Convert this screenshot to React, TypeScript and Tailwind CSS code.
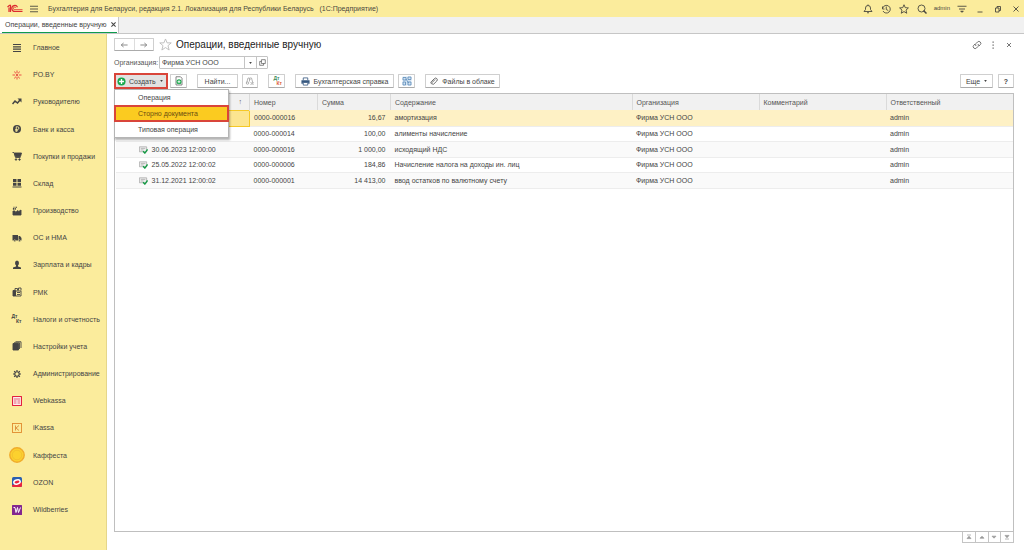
import type { ReactNode } from "react";
import clsx from "clsx";

type IconProps = { className?: string };

function Svg({ children, className = "h-[10px] w-[10px]" }: IconProps & { children: ReactNode }) {
  return (
    <svg viewBox="0 0 20 20" fill="none" stroke="currentColor" strokeWidth="1.8" className={className} aria-hidden="true">
      {children}
    </svg>
  );
}

function Logo() {
  return (
    <svg viewBox="0 0 32 18" className="h-[9px] w-4" fill="none" stroke="#dc2a2f" strokeWidth="2.4" aria-label="1C">
      <path d="M1 6l4-3.500h2V16M4 7v9" />
      <path d="M21 6.500A6 6 0 1 0 15.500 15H31" />
      <path d="M17.800 7.500A2.700 2.700 0 1 0 15.500 11.500H31" strokeWidth="1.800" />
    </svg>
  );
}

const navItems: { label: string; icon: ReactNode }[] = [
  { label: "Главное", icon: <Svg><path d="M2 3h16M2 7.700h16M2 12.300h16M2 17h16" strokeWidth="2.400" /></Svg> },
  {
    label: "PO.BY",
    icon: (
      <Svg className="h-[10px] w-[10px] text-[#e8413c]">
        <path d="M10 1v5M10 14v5M1 10h5M14 10h5M5 3l2.500 4M15 3l-2.500 4M5 17l2.500-4M15 17l-2.500-4" />
        <circle cx="10" cy="10" r="1.500" fill="currentColor" />
      </Svg>
    ),
  },
  {
    label: "Руководителю",
    icon: <Svg><path d="M1 14l5-6 5 4 5-6" strokeWidth="3" /><path d="M11 3h8v8z" fill="currentColor" stroke="none" /></Svg>,
  },
  {
    label: "Банк и касса",
    icon: (
      <Svg>
        <circle cx="10" cy="10" r="8" fill="currentColor" stroke="none" />
        <path d="M8.500 16V5.500h2.500a2.700 2.700 0 0 1 0 5.500H6.500M6.500 13.500H12" stroke="#fbec9c" />
      </Svg>
    ),
  },
  {
    label: "Покупки и продажи",
    icon: (
      <Svg>
        <path d="M1 3h3l3 10h10" />
        <path d="M5 4h14l-2 7H7z" fill="currentColor" />
        <circle cx="8" cy="17" r="1.500" fill="currentColor" />
        <circle cx="15" cy="17" r="1.500" fill="currentColor" />
      </Svg>
    ),
  },
  {
    label: "Склад",
    icon: <Svg><path d="M2 2h7v6H2zM11 2h7v6h-7zM2 9.500h7v6H2zM11 9.500h7v6h-7zM1 17h18v2H1z" fill="currentColor" stroke="none" /></Svg>,
  },
  {
    label: "Производство",
    icon: <Svg><path d="M2 18V10h4l1 3 5-4v3l6-4v10z" fill="currentColor" /><path d="M3 7.500V4M6.500 7.500V4M3 2.500h2M7 2.500h3" strokeWidth="2.400" /></Svg>,
  },
  {
    label: "ОС и НМА",
    icon: (
      <Svg>
        <path d="M1 4h11v11H1zM13 6h3l3 4v5h-6z" fill="currentColor" stroke="none" />
        <circle cx="5.500" cy="15.500" r="2" fill="currentColor" stroke="#fbec9c" strokeWidth="1" />
        <circle cx="15" cy="15.500" r="2" fill="currentColor" stroke="#fbec9c" strokeWidth="1" />
      </Svg>
    ),
  },
  {
    label: "Зарплата и кадры",
    icon: (
      <Svg>
        <ellipse cx="10" cy="6" rx="4" ry="5" fill="currentColor" stroke="none" />
        <path d="M8 10h4v3l6 2v3H2v-3l6-2z" fill="currentColor" stroke="none" />
      </Svg>
    ),
  },
  {
    label: "РМК",
    icon: (
      <Svg>
        <path d="M2 7h5v11H2z" fill="currentColor" />
        <path d="M7 8h11v10H7zM6 7V3h5v4M13 7V2h5v5" />
        <path d="M10 11h6M10 15h6" />
      </Svg>
    ),
  },
  {
    label: "Налоги и отчетность",
    icon: (
      <span className="flex w-[10px] flex-col text-[5px] leading-[5px] font-bold">
        <span>Дт</span>
        <span className="text-right">Кт</span>
      </span>
    ),
  },
  {
    label: "Настройки учета",
    icon: <Svg><path d="M2 5h11v13H2z" fill="currentColor" /><path d="M4 3.500h11V16M7 1.500h11V14" /></Svg>,
  },
  {
    label: "Администрирование",
    icon: (
      <Svg>
        <circle cx="10" cy="10" r="4.500" strokeWidth="2.400" />
        <path d="M10 2v3M10 15v3M2 10h3M15 10h3M4.300 4.300l2 2M13.700 13.700l2 2M15.700 4.300l-2 2M6.300 13.700l-2 2" strokeWidth="2.400" />
      </Svg>
    ),
  },
  {
    label: "Webkassa",
    icon: (
      <Svg>
        <rect x="1" y="1" width="18" height="18" rx="1" fill="#fbeeee" stroke="#e3203f" strokeWidth="2.400" />
        <path d="M4 6h12M4 10h5M11 10h5M4 14h5M11 14h5" stroke="#e3203f" strokeWidth="1.400" />
      </Svg>
    ),
  },
  {
    label: "iKassa",
    icon: <Svg><rect x="1" y="1" width="18" height="18" stroke="#e08a2e" /><path d="M7 5v10M14 5l-6 5 6 5" stroke="#d98a34" /></Svg>,
  },
  {
    label: "Каффеста",
    icon: (
      <Svg className="h-4 w-4">
        <circle cx="10" cy="10" r="9" fill="#fcd12e" stroke="#f0ac2c" />
        <circle cx="10" cy="10" r="6" stroke="#f1bd2e" strokeWidth="1" />
      </Svg>
    ),
  },
  {
    label: "OZON",
    icon: (
      <Svg>
        <rect width="20" height="20" rx="3" fill="#2a5fb0" stroke="none" />
        <path d="M0 16L20 10v7a3 3 0 0 1-3 3H3a3 3 0 0 1-3-3z" fill="#e9253e" stroke="none" />
        <ellipse cx="10" cy="10" rx="6.500" ry="4" fill="#e9253e" stroke="#fff" strokeWidth="3" transform="rotate(-14 10 10)" />
      </Svg>
    ),
  },
  {
    label: "Wildberries",
    icon: <Svg><rect width="20" height="20" rx="1" fill="#83278f" stroke="none" /><path d="M3 5h3l2 10 3-10 2 10 4-10" stroke="#fff" strokeWidth="1.900" /></Svg>,
  },
];

const rows = [
  { date: "", number: "0000-000016", sum: "16,67", content: "амортизация" },
  { date: "", number: "0000-000014", sum: "100,00", content: "алименты начисление" },
  { date: "30.06.2023 12:00:00", number: "0000-000016", sum: "1 000,00", content: "исходящий НДС" },
  { date: "25.05.2022 12:00:02", number: "0000-000006", sum: "184,86", content: "Начисление налога на доходы ин. лиц" },
  { date: "31.12.2021 12:00:02", number: "0000-000001", sum: "14 413,00", content: "ввод остатков по валютному счету" },
];

const columns = [
  { label: "Номер", className: "w-[68px]" },
  { label: "Сумма", className: "w-[73px]" },
  { label: "Содержание", className: "" },
  { label: "Организация", className: "w-[127px]" },
  { label: "Комментарий", className: "w-[127px]" },
  { label: "Ответственный", className: "w-[127px]" },
];

function TitleBar() {
  return (
    <header className="flex h-[17px] items-center bg-[#fbec9c] pr-[3px] pl-[7px] text-[#4a4840]">
      <Logo />
      <button type="button" aria-label="Меню" className="ml-[6px]">
        <Svg><path d="M2 4.500h16M2 10h16M2 15.500h16" /></Svg>
      </button>
      <span className="ml-[9px] flex-1 whitespace-pre">
        Бухгалтерия для Беларуси, редакция 2.1. Локализация для Республики Беларусь   (1С:Предприятие)
      </span>
      <div className="flex items-center gap-2">
        <button type="button" aria-label="Уведомления">
          <Svg><path d="M2 15h16l-3-4V8a5 5 0 0 0-10 0v3zM10 1v2M8 17.500h4" /></Svg>
        </button>
        <button type="button" aria-label="История">
          <Svg><path d="M3 5v5h4M3.500 8A7.700 7.700 0 1 1 4 14M10.500 5v6l4 2" /></Svg>
        </button>
        <button type="button" aria-label="Избранное">
          <Svg><path d="M10 1.500l2.500 5.800 6.300.6-4.800 4.200 1.500 6.400-5.500-3.400-5.500 3.400L6 12.100 1.200 7.900l6.300-.6z" /></Svg>
        </button>
        <button type="button" aria-label="Поиск">
          <Svg><circle cx="9" cy="9" r="7" /><path d="M13 13l6 6" strokeWidth="3" /></Svg>
        </button>
        <button type="button" className="-mx-[1px] text-[6px]">admin</button>
        <button type="button" aria-label="Настройки">
          <Svg><path d="M1 4.500h18M4 10h12" /><path d="M7 14h6l-3 3z" fill="currentColor" strokeWidth="1" /></Svg>
        </button>
        <button type="button" aria-label="Свернуть">
          <Svg><path d="M5 16h10" /></Svg>
        </button>
        <button type="button" aria-label="Развернуть">
          <Svg><path d="M5 8h7v8H5zM8 8V5h7v8h-3" /></Svg>
        </button>
        <button type="button" aria-label="Закрыть">
          <Svg><path d="M5 5l10 10M15 5L5 15" /></Svg>
        </button>
      </div>
    </header>
  );
}

function TabBar() {
  return (
    <div className="flex h-[17px] border-b border-[#c6c6c6] bg-[#f1f1f1]">
      <div className="flex items-center border-r border-[#c6c6c6] bg-white pr-[1px] pl-[2px]">
        <div className="flex h-full items-center gap-[3px] border-b border-[#0f9b4c] pl-[3px]">
          <span>Операции, введенные вручную</span>
          <button type="button" aria-label="Закрыть вкладку">
            <Svg className="h-[7px] w-[7px]"><path d="M4 4l12 12M16 4L4 16" strokeWidth="3" /></Svg>
          </button>
        </div>
      </div>
    </div>
  );
}

function Sidebar() {
  return (
    <nav className="flex w-[107px] shrink-0 flex-col border-r border-[#e5d68a] bg-[#fbec9c] pb-[27px]">
      {navItems.map(({ label, icon }) => (
        <a key={label} href="#" className="flex flex-1 items-center whitespace-nowrap">
          <span className="flex w-[33px] shrink-0 justify-center">{icon}</span>
          {label}
        </a>
      ))}
    </nav>
  );
}

function ToolButton({ children, className, label }: { children: ReactNode; className?: string; label?: string }) {
  return (
    <button
      type="button"
      aria-label={label}
      className={clsx(
        "flex h-[14px] items-center justify-center rounded-[1px] border border-[#cfcfcf] border-b-[#ababab] bg-white whitespace-nowrap",
        className,
      )}
    >
      {children}
    </button>
  );
}

function Caret() {
  return (
    <svg viewBox="0 0 4 3" className="h-[2px] w-[3px]" aria-hidden="true">
      <path d="M0 0h4L2 3z" fill="#444" />
    </svg>
  );
}

function PageHeader() {
  return (
    <div className="flex h-[13px] items-center">
      <div className="flex h-[13px] w-10 rounded-[1px] border border-[#cfcfcf] border-b-[#ababab] text-[#888]">
        <button type="button" aria-label="Назад" className="flex flex-1 items-center justify-center border-r border-[#ddd]">
          <Svg className="h-2 w-2"><path d="M19 10H3M9 5l-6 5 6 5" strokeWidth="2.400" /></Svg>
        </button>
        <button type="button" aria-label="Вперед" className="flex flex-1 items-center justify-center">
          <Svg className="h-2 w-2"><path d="M1 10h16M11 5l6 5-6 5" strokeWidth="2.400" /></Svg>
        </button>
      </div>
      <button type="button" aria-label="В избранное" className="ml-[5px] text-[#bbb]">
        <Svg className="h-[13px] w-[13px]">
          <path d="M10 1.500l2.500 6h6.300l-5 4.300 1.800 6.700-5.600-3.800-5.600 3.800 1.800-6.700-5-4.300h6.300z" strokeWidth="1.400" />
        </Svg>
      </button>
      <h1 className="ml-1 flex-1 text-[10px] leading-[13px] text-[#222]">Операции, введенные вручную</h1>
      <div className="flex items-center gap-[6px] text-[#666]">
        <button type="button" aria-label="Ссылка">
          <Svg>
            <path d="M8 12a4 4 0 0 1 0-5l3-3a3.700 3.700 0 0 1 5.500 5.500L14 12M12 8a4 4 0 0 1 0 5l-3 3a3.700 3.700 0 0 1-5.500-5.500L6 8" />
          </Svg>
        </button>
        <button type="button" aria-label="Еще">
          <Svg><path d="M9 3h2.500v2.500H9zM9 9h2.500v2.500H9zM9 15h2.500v2.500H9z" fill="currentColor" stroke="none" /></Svg>
        </button>
        <button type="button" aria-label="Закрыть">
          <Svg><path d="M6 6l8 8M14 6l-8 8" /></Svg>
        </button>
      </div>
    </div>
  );
}

function OrganizationField() {
  return (
    <div className="mt-[5px] flex h-[13px] items-center">
      <label htmlFor="organization" className="w-[45px] text-[#555]">Организация:</label>
      <div className="flex h-[13px] w-[109px] rounded-[1px] border border-[#c4c4c4]">
        <input id="organization" defaultValue="Фирма УСН ООО" className="w-0 min-w-0 flex-1 pl-[2px] outline-none" />
        <button type="button" aria-label="Выбрать" className="flex w-3 items-center justify-center border-l border-[#c4c4c4]">
          <Caret />
        </button>
        <button type="button" aria-label="Открыть" className="flex w-[11px] items-center justify-center border-l border-[#c4c4c4]">
          <Svg className="h-[7px] w-[7px]"><path d="M7 2h11v11H7zM7 7H2v11h11v-5" /></Svg>
        </button>
      </div>
    </div>
  );
}

function CreateMenu() {
  return (
    <div className="relative">
      <button
        type="button"
        aria-expanded="true"
        className="flex h-4 w-[54px] items-center border-2 border-[#d9453a] bg-[#e2e2e2] pl-[1px] text-[#444]"
      >
        <Svg className="h-[9px] w-[9px]">
          <circle cx="10" cy="10" r="9" fill="#18a84c" stroke="none" />
          <path d="M10 4.500v11M4.500 10h11" stroke="#fff" strokeWidth="3" />
        </Svg>
        <span className="mr-1 ml-[3px]">Создать</span>
        <Caret />
      </button>
      <ul className="absolute top-4 left-0 z-10 w-[115px] border border-[#b5b5b5] bg-white shadow-[1px_2px_2px_rgba(0,0,0,0.3)]">
        <li><button type="button" className="flex h-[15px] w-full items-center pl-[23px]">Операция</button></li>
        <li className="-mx-[1px]">
          <button type="button" className="flex h-[17px] w-full items-center border-2 border-[#d9453a] bg-[#fbcb20] pl-[22px] text-[#6b4e10]">
            Сторно документа
          </button>
        </li>
        <li><button type="button" className="flex h-[15px] w-full items-center pl-[23px]">Типовая операция</button></li>
      </ul>
    </div>
  );
}

function Toolbar() {
  return (
    <div className="mt-1 flex h-4 items-center">
      <CreateMenu />
      <ToolButton label="Скопировать" className="ml-[2px] w-[17px]">
        <Svg>
          <path d="M4 1.500h9l3 3V18H4z" stroke="#777" />
          <circle cx="10" cy="11.500" r="5" fill="#18a84c" stroke="none" />
          <path d="M10 8.500v6M7 11.500h6" stroke="#fff" />
        </Svg>
      </ToolButton>
      <ToolButton className="ml-[10px] w-[41px]">Найти...</ToolButton>
      <ToolButton label="Отменить поиск" className="ml-1 w-4 text-[#aaa]">
        <Svg>
          <path d="M3 15l3-11h3v7M10 4h3l3 11M9 7h2" />
          <circle cx="5" cy="14" r="2.500" />
          <path d="M11 12l6 6M17 12l-6 6" />
        </Svg>
      </ToolButton>
      <ToolButton label="Дт Кт" className="ml-[10px] w-[17px]">
        <span className="flex w-[11px] flex-col text-[5px] leading-[5px] font-bold">
          <span className="text-[#3c8c5c]">Дт</span>
          <span className="text-right text-[#dd5a35]">Кт</span>
        </span>
      </ToolButton>
      <ToolButton className="ml-[10px] w-[99px] gap-1">
        <Svg className="h-[9px] w-[9px] text-[#35577f]">
          <path d="M5 7V2h10v5M5 12h10v6H5z" fill="#fff" />
          <path d="M1 7h18v8h-3v-3H4v3H1z" fill="currentColor" stroke="none" />
        </Svg>
        Бухгалтерская справка
      </ToolButton>
      <ToolButton label="Структура" className="ml-1 w-[17px]">
        <Svg className="h-[10px] w-[10px] text-[#4a7fb2]">
          <path d="M1 1h18v18H1z" fill="#d4e4f2" stroke="none" />
          <path d="M2 3h6v5H2zM12 2h6v5h-6zM12 12h6v6h-6zM8 6l5 8M2 12h5v6H2z" strokeWidth="1.400" />
        </Svg>
      </ToolButton>
      <ToolButton className="ml-[10px] w-[75px] gap-1">
        <Svg className="h-2 w-2 text-[#666]">
          <path d="M3 12l8-8a4 4 0 0 1 6 6l-8 8a3 3 0 0 1-4-4l8-8M3 12a3 3 0 0 0 1 5" strokeWidth="2.400" />
        </Svg>
        Файлы в облаке
      </ToolButton>
      <ToolButton className="ml-auto w-[33px] gap-1">
        Еще <Caret />
      </ToolButton>
      <ToolButton label="Справка" className="ml-[5px] w-4 font-bold">?</ToolButton>
    </div>
  );
}

function DocumentIcon() {
  return (
    <Svg className="h-[9px] w-[9px] text-[#999]">
      <path d="M1 4h16v11H1zM4 7.500h10M4 11h6" fill="#eee" strokeWidth="1.400" />
      <path d="M9 14l4 4 6-8" stroke="#159b45" strokeWidth="3" />
    </Svg>
  );
}

function OperationsTable() {
  return (
    <div className="mt-1 flex-1 border border-[#bfbfbf]">
      <table className="w-full table-fixed border-collapse text-left whitespace-nowrap">
        <thead>
          <tr className="h-4 bg-[#f1f1f1] text-[#555]">
            <th className="w-[134px] pr-[7px] text-right font-normal">↑</th>
            {columns.map(({ label, className }) => (
              <th key={label} className={clsx("border-l border-[#dadada] pl-1 font-normal", className)}>
                {label}
              </th>
            ))}
          </tr>
        </thead>
        <tbody>
          {rows.map(({ date, number, sum, content }, index) => (
            <tr
              key={content}
              className={clsx(
                "border-b border-[#ededed] odd:h-4 even:h-[15px]",
                index === 0 ? "bg-[#fef1c5]" : "odd:bg-[#fafafa]",
              )}
            >
              <td className={clsx(index === 0 && "border border-[#f5c826] bg-[#fce590]")}>
                {date && (
                  <span className="flex items-center gap-1 pl-[23px]">
                    <DocumentIcon />
                    {date}
                  </span>
                )}
              </td>
              <td className="pl-1">{number}</td>
              <td className="pr-[5px] text-right">{sum}</td>
              <td className="pl-1">{content}</td>
              <td className="pl-1">Фирма УСН ООО</td>
              <td />
              <td className="pl-1">admin</td>
            </tr>
          ))}
        </tbody>
      </table>
    </div>
  );
}

const pagerButtons = [
  { label: "В начало", path: "M5 5h10M5 14h10l-5-6z" },
  { label: "Вверх", path: "M5 13h10l-5-5z" },
  { label: "Вниз", path: "M5 8h10l-5 5z" },
  { label: "В конец", path: "M5 6h10l-5 6zM5 15h10" },
];

function Pager() {
  return (
    <div className="ml-auto flex h-[11px] w-[52px] border border-t-0 border-[#c4c4c4] text-[#999]">
      {pagerButtons.map(({ label, path }) => (
        <button
          key={label}
          type="button"
          aria-label={label}
          className="flex flex-1 items-center justify-center border-l border-[#c4c4c4] first:border-l-0"
        >
          <Svg className="h-2 w-2"><path d={path} fill="currentColor" /></Svg>
        </button>
      ))}
    </div>
  );
}

export default function App() {
  return (
    <div className="flex min-h-screen flex-col bg-white font-['Liberation_Sans',Arial,sans-serif] text-[7px] leading-[9px] text-[#444]">
      <TitleBar />
      <TabBar />
      <div className="flex flex-1">
        <Sidebar />
        <main className="flex min-w-0 flex-1 flex-col pt-1 pr-[10px] pb-[7px] pl-[7px]">
          <PageHeader />
          <OrganizationField />
          <Toolbar />
          <OperationsTable />
          <Pager />
        </main>
      </div>
    </div>
  );
}
